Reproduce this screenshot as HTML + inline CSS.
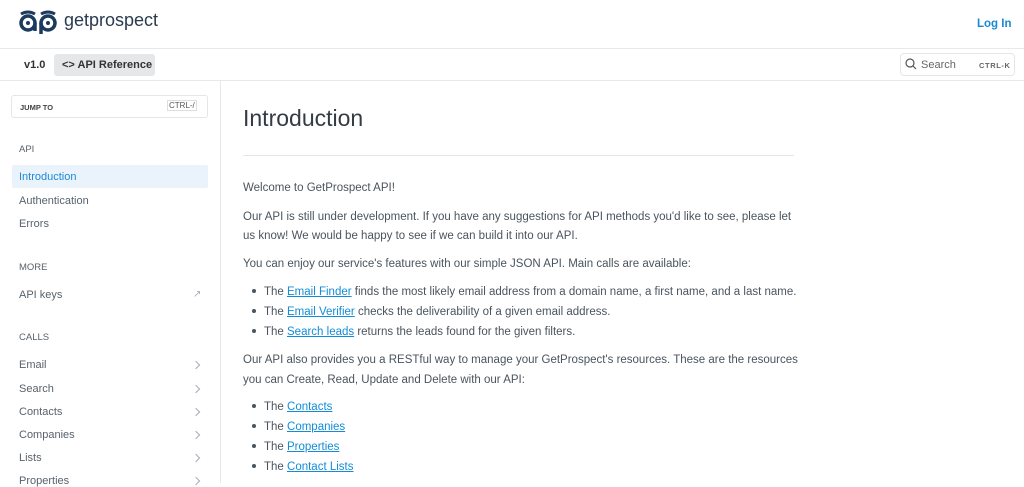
<!DOCTYPE html>
<html><head><meta charset="utf-8"><style>
*{margin:0;padding:0;box-sizing:border-box}
body{width:1024px;height:483px;overflow:hidden;background:#fff;font-family:"Liberation Sans",sans-serif;color:#4a545e;position:relative}
.a{position:absolute;white-space:nowrap}
.t{font-size:11.5px}
a{color:#118cd8;text-decoration:underline}
.side{font-size:11px;color:#58626c}
.chev{position:absolute;left:193px;width:6px;height:6px;border-right:1.3px solid #aab;border-top:1.3px solid #aab;transform:rotate(45deg)}
.dot{display:inline-block;width:4px;height:4px;background:#4a545e;border-radius:50%;margin:0 8px 2px 2px}
</style></head><body>
<svg class="a" style="left:19px;top:9px" width="38" height="26" viewBox="0 0 38 26"><path d="M2 5 Q9 1 16 5 M22 5 Q29 1 36 5" stroke="#1d3a5f" stroke-width="3" fill="none"/><circle cx="9" cy="14" r="7" stroke="#1d3a5f" stroke-width="3.5" fill="none"/><circle cx="29" cy="14" r="7" stroke="#1d3a5f" stroke-width="3.5" fill="none"/><path d="M16 14 V22 M22 14 V25" stroke="#1d3a5f" stroke-width="3.5"/><circle cx="9" cy="14" r="2" fill="#1d3a5f"/><circle cx="29" cy="14" r="2" fill="#1d3a5f"/></svg>
<div class="a" style="left:64px;top:10px;font-size:18px;color:#2a3a50">getprospect</div>
<div class="a" style="left:977px;top:18px;font-size:11.5px;color:#1a8ad4;font-weight:bold">Log In</div>
<div class="a" style="left:0;top:48px;width:1024px;height:1px;background:#e6e8ea"></div>
<div class="a" style="left:24px;top:59px;font-size:11px;color:#333;font-weight:bold">v1.0</div>
<div class="a" style="left:54px;top:54px;width:101px;height:22px;background:#e5e7e9;border-radius:3px"></div>
<div class="a" style="left:62px;top:59px;font-size:11px;color:#333;font-weight:bold">&lt;&gt; API Reference</div>
<div class="a" style="left:900px;top:53px;width:115px;height:23px;border:1px solid #e4e6e8;border-radius:4px"></div>
<svg class="a" style="left:905px;top:58px" width="12" height="12"><circle cx="5" cy="5" r="4" stroke="#555" stroke-width="1.2" fill="none"/><path d="M8 8l3 3" stroke="#555" stroke-width="1.2"/></svg>
<div class="a" style="left:921px;top:59px;font-size:11px;color:#666">Search</div>
<div class="a" style="left:979px;top:61px;font-size:7.5px;color:#666;font-weight:bold;letter-spacing:0.6px">CTRL-K</div>
<div class="a" style="left:0;top:80px;width:1024px;height:1px;background:#e6e8ea"></div>
<div class="a" style="left:220px;top:81px;width:1px;height:402px;background:#e6e8ea"></div>
<div class="a" style="left:11px;top:95px;width:197px;height:23px;border:1px solid #e4e6e8;border-radius:3px"></div>
<div class="a" style="left:20px;top:103px;font-size:7.5px;font-weight:bold;color:#444">JUMP TO</div>
<div class="a" style="left:167px;top:100px;font-size:8px;color:#555;border:1px solid #ddd;padding:0 1px">CTRL-/</div>
<div class="a side" style="left:19px;top:144px;font-size:9.5px">API</div>
<div class="a" style="left:12px;top:165px;width:196px;height:23px;background:#eaf3fb;border-radius:2px"></div>
<div class="a side" style="left:19px;top:171px;color:#1a8ad4">Introduction</div>
<div class="a side" style="left:19px;top:195px">Authentication</div>
<div class="a side" style="left:19px;top:218px">Errors</div>
<div class="a side" style="left:19px;top:262px;font-size:9.5px">MORE</div>
<div class="a side" style="left:19px;top:289px">API keys</div>
<div class="a" style="left:193px;top:289px;font-size:10px;color:#aab">↗</div>
<div class="a side" style="left:19px;top:332px;font-size:9.5px">CALLS</div>
<div class="a side" style="left:19px;top:359px">Email</div><div class="chev" style="top:362px"></div>
<div class="a side" style="left:19px;top:383px">Search</div><div class="chev" style="top:386px"></div>
<div class="a side" style="left:19px;top:406px">Contacts</div><div class="chev" style="top:409px"></div>
<div class="a side" style="left:19px;top:429px">Companies</div><div class="chev" style="top:432px"></div>
<div class="a side" style="left:19px;top:452px">Lists</div><div class="chev" style="top:455px"></div>
<div class="a side" style="left:19px;top:475px">Properties</div><div class="chev" style="top:478px"></div>
<div class="a" style="left:243px;top:105px;font-size:23px;color:#333c45">Introduction</div>
<div class="a" style="left:243px;top:155px;width:551px;height:1px;background:#e4e6e8"></div>
<div class="a t" style="left:243px;top:182px">Welcome to GetProspect API!</div>
<div class="a t" style="left:243px;top:211px">Our API is still under development. If you have any suggestions for API methods you'd like to see, please let</div>
<div class="a t" style="left:243px;top:230px">us know! We would be happy to see if we can build it into our API.</div>
<div class="a t" style="left:243px;top:258px">You can enjoy our service's features with our simple JSON API. Main calls are available:</div>
<div class="a t" style="left:250px;top:286px"><span class="dot"></span>The <a>Email Finder</a> finds the most likely email address from a domain name, a first name, and a last name.</div>
<div class="a t" style="left:250px;top:306px"><span class="dot"></span>The <a>Email Verifier</a> checks the deliverability of a given email address.</div>
<div class="a t" style="left:250px;top:326px"><span class="dot"></span>The <a>Search leads</a> returns the leads found for the given filters.</div>
<div class="a t" style="left:243px;top:354px">Our API also provides you a RESTful way to manage your GetProspect's resources. These are the resources</div>
<div class="a t" style="left:243px;top:374px">you can Create, Read, Update and Delete with our API:</div>
<div class="a t" style="left:250px;top:401px"><span class="dot"></span>The <a>Contacts</a></div>
<div class="a t" style="left:250px;top:421px"><span class="dot"></span>The <a>Companies</a></div>
<div class="a t" style="left:250px;top:441px"><span class="dot"></span>The <a>Properties</a></div>
<div class="a t" style="left:250px;top:461px"><span class="dot"></span>The <a>Contact Lists</a></div>
</body></html>
